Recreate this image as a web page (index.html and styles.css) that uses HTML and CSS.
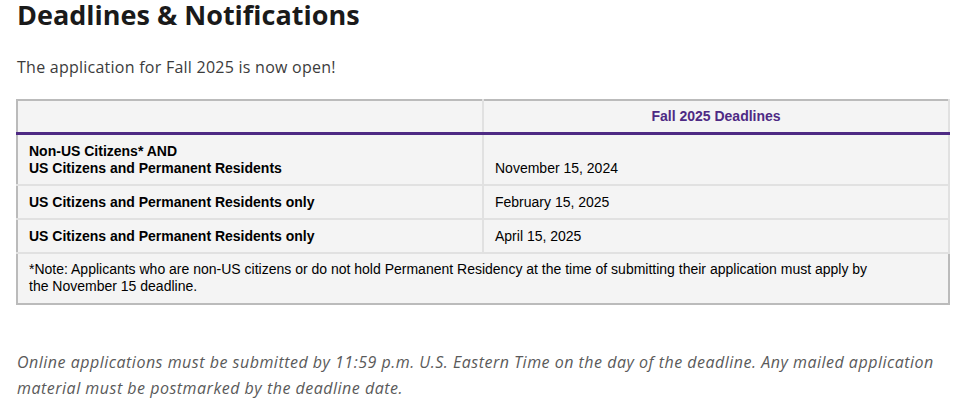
FILE: index.html
```html
<!DOCTYPE html>
<html>
<head>
<meta charset="utf-8">
<link rel="stylesheet" href="styles.css">
</head>
<body>
<main class="page">
  <h2 class="title">Deadlines &amp; Notifications</h2>
  <p class="lead">The application for Fall 2025 is now open!</p>
  <table class="deadlines">
    <thead>
      <tr>
        <th class="blank"></th>
        <th class="term">Fall 2025 Deadlines</th>
      </tr>
    </thead>
    <tbody>
      <tr>
        <td class="who">Non-US Citizens* AND<br>US Citizens and Permanent Residents</td>
        <td class="date bottom">November 15, 2024</td>
      </tr>
      <tr>
        <td class="who">US Citizens and Permanent Residents only</td>
        <td class="date">February 15, 2025</td>
      </tr>
      <tr>
        <td class="who">US Citizens and Permanent Residents only</td>
        <td class="date">April 15, 2025</td>
      </tr>
      <tr>
        <td class="note" colspan="2">*Note: Applicants who are non-US citizens or do not hold Permanent Residency at the time of submitting their application must apply by<br>the November 15 deadline.</td>
      </tr>
    </tbody>
  </table>
  <p class="fineprint">Online applications must be submitted by 11:59 p.m. U.S. Eastern Time on the day of the deadline. Any mailed application material must be postmarked by the deadline date.</p>
</main>
</body>
</html>
```

FILE: styles.css
```css
html, body {
  margin: 0;
  padding: 0;
  background: #fff;
}
.page {
  padding: 0 11px 0 17px;
  font-family: "Open Sans", "Liberation Sans", sans-serif;
  color: #3a3a3a;
}
.title {
  margin: 0;
  padding-top: 2px;
  font-family: "Open Sans", sans-serif;
  font-weight: 700;
  font-size: 27px;
  line-height: 25px;
  color: #1a1a1a;
}
.lead {
  margin: 30px 0 0;
  font-size: 16px;
  line-height: 20px;
  letter-spacing: 0.25px;
  color: #3c3c3c;
}
.deadlines {
  margin-top: 22px;
  width: 934px;
  margin-left: -1px;
  border-collapse: collapse;
  background: #f4f4f4;
  font-family: "Liberation Sans", Arial, sans-serif;
  font-size: 14px;
  line-height: 17px;
  color: #000;
  table-layout: fixed;
  border-top: 2px solid #bbbbbb;
  border-left: 2px solid #bbbbbb;
}
.deadlines th,
.deadlines td {
  border: 2px solid #e1e1e1;
  padding: 8px 11px 7px;
  text-align: left;
  vertical-align: middle;
}
.deadlines thead th {
  border-top: 2px solid #bbbbbb;
  border-bottom: 3px solid #4e2a84;
  padding: 7px 11px;
  height: 17px;
}
.deadlines th.blank {
  border-left: 2px solid #bbbbbb;
}
.deadlines th.term {
  text-align: center;
  color: #4e2a84;
  font-weight: 700;
  font-size: 14px;
}
.deadlines td.who {
  font-weight: 700;
  border-left: 2px solid #bbbbbb;
}
.deadlines td.bottom {
  vertical-align: bottom;
}
.deadlines td.note {
  border: 2px solid #bbbbbb;
  padding: 7px 11px 8px;
}
.fineprint {
  margin: 44px 0 0;
  font-style: italic;
  font-size: 16px;
  line-height: 26px;
  letter-spacing: 0.5px;
  color: #5a5a5a;
}
```
